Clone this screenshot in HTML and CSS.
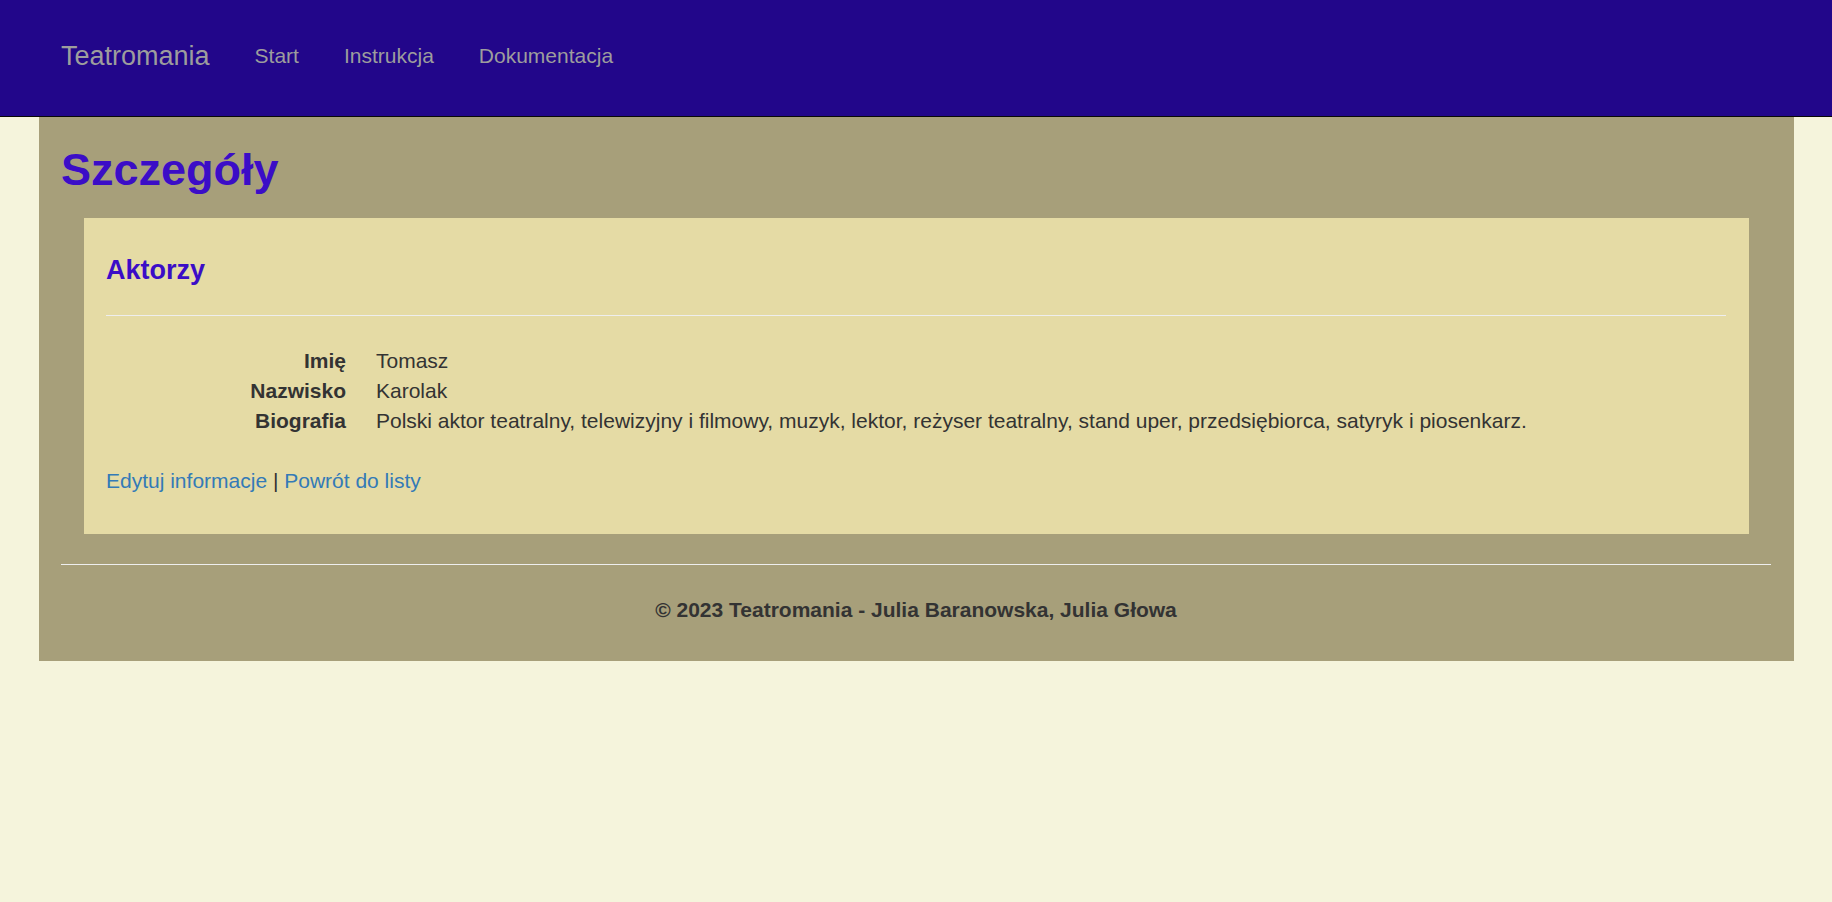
FILE: index.html
```html
<!DOCTYPE html>
<html lang="pl">
<head>
<meta charset="utf-8">
<title>Szczegóły - Teatromania</title>
<link rel="stylesheet" href="styles.css">
</head>
<body>
<nav class="navbar">
  <div class="nav-container">
    <a class="brand" href="#">Teatromania</a>
    <ul class="nav-links">
      <li><a href="#">Start</a></li>
      <li><a href="#">Instrukcja</a></li>
      <li><a href="#">Dokumentacja</a></li>
    </ul>
  </div>
</nav>
<div class="page">
  <h2 class="page-title">Szczegóły</h2>
  <div class="card">
    <h4 class="card-title">Aktorzy</h4>
    <hr class="card-rule">
    <dl class="details">
      <dt>Imię</dt>
      <dd>Tomasz</dd>
      <dt>Nazwisko</dt>
      <dd>Karolak</dd>
      <dt>Biografia</dt>
      <dd>Polski aktor teatralny, telewizyjny i filmowy, muzyk, lektor, reżyser teatralny, stand uper, przedsiębiorca, satyryk i piosenkarz.</dd>
    </dl>
    <p class="actions"><a href="#">Edytuj informacje</a> | <a href="#">Powrót do listy</a></p>
  </div>
  <hr class="footer-rule">
  <footer class="footer">
    <p>© 2023 Teatromania - Julia Baranowska, Julia Głowa</p>
  </footer>
</div>
</body>
</html>
```

FILE: styles.css
```css
* {
  box-sizing: border-box;
}

html, body {
  margin: 0;
  padding: 0;
}

body {
  background: #f5f4dc;
  color: #333333;
  font-family: "Liberation Sans", Arial, sans-serif;
  font-size: 21px;
  line-height: 30px;
}

a {
  text-decoration: none;
}

.navbar {
  background: #22068a;
  height: 117px;
  border-bottom: 1px solid #080808;
}

.nav-container {
  width: 1755px;
  margin: 0 auto;
  padding: 18px 22.5px 0;
  display: flex;
  align-items: flex-start;
}

.brand {
  margin-left: -22.5px;
  padding: 22.5px;
  font-size: 27px;
  line-height: 30px;
  color: #9d9d9d;
}

.nav-links {
  list-style: none;
  margin: 0;
  padding: 0;
  display: flex;
}

.nav-links a {
  display: block;
  padding: 22.5px;
  font-size: 21px;
  line-height: 30px;
  color: #9d9d9d;
}

.page {
  width: 1755px;
  margin: 0 auto;
  background: #a79f7a;
  padding: 0 22.5px 21px;
  display: flow-root;
}

.page-title {
  margin: 28px 0 23.5px;
  font-size: 45px;
  line-height: 49.5px;
  font-weight: bold;
  color: #3b0dc7;
}

.card {
  margin: 0 22.5px;
  padding: 22.5px;
  background: #e5dba5;
}

.card-title {
  margin: 15px 0;
  font-size: 27px;
  line-height: 29.7px;
  font-weight: bold;
  color: #3b0dc7;
}

.card-rule {
  margin: 30px 0;
  border: 0;
  border-top: 1px solid #eeeeee;
  height: 0;
}

.details {
  margin: 0 0 30px;
  display: grid;
  grid-template-columns: 240px 1fr;
  column-gap: 30px;
}

.details dt {
  font-weight: bold;
  text-align: right;
}

.details dd {
  margin: 0;
}

.actions {
  margin: 0 0 15px;
}

.actions a {
  color: #337ab7;
}

.footer-rule {
  margin: 30px 0;
  border: 0;
  border-top: 1px solid #eeeeee;
  height: 0;
}

.footer p {
  margin: 0 0 15px;
  text-align: center;
  font-weight: bold;
}
```
